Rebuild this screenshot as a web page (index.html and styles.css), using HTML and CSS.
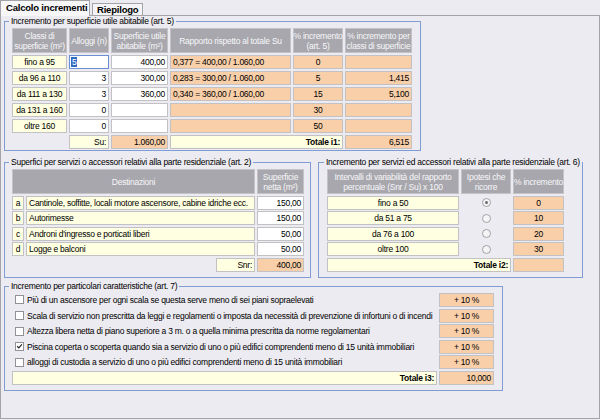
FILE: index.html
```html
<!DOCTYPE html>
<html lang="it">
<head>
<meta charset="utf-8">
<title>Calcolo incrementi</title>
<link rel="stylesheet" href="styles.css">
</head>
<body>
<div class="tabs">
  <div class="tab active">Calcolo incrementi</div>
  <div class="tab">Riepilogo</div>
</div>
<div class="panel">
  <fieldset class="group g1">
    <legend>Incremento per superficie utile abitabile (art. 5)</legend>
    <div class="grid t1">
      <div class="h">Classi di<br>superficie (m²)</div>
      <div class="h">Alloggi (n)</div>
      <div class="h">Superficie utile<br>abitabile (m²)</div>
      <div class="h">Rapporto rispetto al totale Su</div>
      <div class="h">% incremento<br>(art. 5)</div>
      <div class="h">% incremento per<br>classi di superficie</div>

      <div class="c y ctr">fino a 95</div>
      <div class="c w focus"><span class="sel">5</span></div>
      <div class="c w r">400,00</div>
      <div class="c o">0,377 = 400,00 / 1.060,00</div>
      <div class="c o ctr">0</div>
      <div class="c o r"></div>

      <div class="c y ctr">da 96 a 110</div>
      <div class="c w r">3</div>
      <div class="c w r">300,00</div>
      <div class="c o">0,283 = 300,00 / 1.060,00</div>
      <div class="c o ctr">5</div>
      <div class="c o r">1,415</div>

      <div class="c y ctr">da 111 a 130</div>
      <div class="c w r">3</div>
      <div class="c w r">360,00</div>
      <div class="c o">0,340 = 360,00 / 1.060,00</div>
      <div class="c o ctr">15</div>
      <div class="c o r">5,100</div>

      <div class="c y ctr">da 131 a 160</div>
      <div class="c w r">0</div>
      <div class="c w r"></div>
      <div class="c o"></div>
      <div class="c o ctr">30</div>
      <div class="c o r"></div>

      <div class="c y ctr">oltre 160</div>
      <div class="c w r">0</div>
      <div class="c w r"></div>
      <div class="c o"></div>
      <div class="c o ctr">50</div>
      <div class="c o r"></div>

      <div class="blank"></div>
      <div class="c y r">Su:</div>
      <div class="c o r">1.060,00</div>
      <div class="c y r b span2">Totale i1:</div>
      <div class="c o r">6,515</div>
    </div>
  </fieldset>

  <div class="row2">
    <fieldset class="group g2">
      <legend>Superfici per servizi o accessori relativi alla parte residenziale (art. 2)</legend>
      <div class="grid t2">
        <div class="h span2">Destinazioni</div>
        <div class="h">Superficie<br>netta (m²)</div>

        <div class="c y ctr">a</div>
        <div class="c y">Cantinole, soffitte, locali motore ascensore, cabine idriche ecc.</div>
        <div class="c w r">150,00</div>

        <div class="c y ctr">b</div>
        <div class="c y">Autorimesse</div>
        <div class="c w r">150,00</div>

        <div class="c y ctr">c</div>
        <div class="c y">Androni d'ingresso e porticati liberi</div>
        <div class="c w r">50,00</div>

        <div class="c y ctr">d</div>
        <div class="c y">Logge e balconi</div>
        <div class="c w r">50,00</div>

        <div class="blank"></div>
        <div class="c y r snr">Snr:</div>
        <div class="c o r">400,00</div>
      </div>
    </fieldset>

    <fieldset class="group g3">
      <legend>Incremento per servizi ed accessori relativi alla parte residenziale (art. 6)</legend>
      <div class="grid t3">
        <div class="h">Intervalli di variabilità del rapporto<br>percentuale (Snr / Su) x 100</div>
        <div class="h">Ipotesi che<br>ricorre</div>
        <div class="h">% incremento</div>

        <div class="c y ctr">fino a 50</div>
        <div class="radio-cell"><span class="radio on"></span></div>
        <div class="c o ctr">0</div>

        <div class="c y ctr">da 51 a 75</div>
        <div class="radio-cell"><span class="radio"></span></div>
        <div class="c o ctr">10</div>

        <div class="c y ctr">da 76 a 100</div>
        <div class="radio-cell"><span class="radio"></span></div>
        <div class="c o ctr">20</div>

        <div class="c y ctr">oltre 100</div>
        <div class="radio-cell"><span class="radio"></span></div>
        <div class="c o ctr">30</div>

        <div class="c y r b span2">Totale i2:</div>
        <div class="c o ctr"></div>
      </div>
    </fieldset>
  </div>

  <fieldset class="group g4">
    <legend>Incremento per particolari caratteristiche (art. 7)</legend>
    <div class="grid t4">
      <div class="opt"><span class="chk"></span>Più di un ascensore per ogni scala se questa serve meno di sei piani sopraelevati</div>
      <div class="c o ctr">+ 10 %</div>
      <div class="opt"><span class="chk"></span>Scala di servizio non prescritta da leggi e regolamenti o imposta da necessità di prevenzione di infortuni o di incendi</div>
      <div class="c o ctr">+ 10 %</div>
      <div class="opt"><span class="chk"></span>Altezza libera netta di piano superiore a 3 m. o a quella minima prescritta da norme regolamentari</div>
      <div class="c o ctr">+ 10 %</div>
      <div class="opt"><span class="chk on"><svg viewBox="0 0 9 9" width="9" height="9"><path d="M1.5 4.2 L3.6 6.4 L7.6 1.8" fill="none" stroke="#222" stroke-width="1.5"/></svg></span>Piscina coperta o scoperta quando sia a servizio di uno o più edifici comprendenti meno di 15 unità immobiliari</div>
      <div class="c o ctr">+ 10 %</div>
      <div class="opt"><span class="chk"></span>alloggi di custodia a servizio di uno o più edifici comprendenti meno di 15 unità immobiliari</div>
      <div class="c o ctr">+ 10 %</div>
      <div class="c y r b">Totale i3:</div>
      <div class="c o r">10,000</div>
    </div>
  </fieldset>
</div>
</body>
</html>
```

FILE: styles.css
```css
* { box-sizing: border-box; }
html, body { margin: 0; padding: 0; }
body {
  width: 600px;
  height: 420px;
  overflow: hidden;
  background: #ecebf1;
  color: #000;
  font-family: "Liberation Sans", Arial, sans-serif;
  font-size: 8.5px;
  letter-spacing: -0.25px;
  line-height: 11px;
}

.tabs {
  display: flex;
  align-items: flex-end;
  height: 15px;
}
.tab {
  font-weight: bold;
  font-size: 9.5px;
  letter-spacing: -0.2px;
  white-space: nowrap;
  border: 1px solid #a3a3a8;
  border-bottom: none;
  background: #f4f4f6;
  height: 12px;
  line-height: 11px;
  padding: 0 4px;
  margin-left: 2px;
}
.tab.active {
  position: relative;
  z-index: 1;
  margin-left: 0;
  width: 90px;
  height: 16px;
  margin-bottom: -1px;
  line-height: 14px;
  padding: 0 0 0 5px;
  background: #f7f7f9;
}

.panel {
  height: 404px;
  border: 1px solid #a3a3a8;
  padding: 0 3px;
}

.group {
  margin: 0;
  min-width: 0;
  border: 1px solid #7f9dd2;
  padding: 1px 8px 1px 7px;
}
.group legend {
  margin-left: -3px;
  padding: 0 2px;
  line-height: 11px;
  white-space: nowrap;
}

.g1 { width: 417px; padding-bottom: 1px; }

.row2 {
  display: flex;
  gap: 7px;
  margin-top: 6px;
}
.g2 { width: 307px; padding: 1px 6px 5px 7px; }
.g3 { width: 265px; padding: 1px 3px 5px 8px; }

.g4 { width: 499px; margin-top: 3px; padding: 1px 8px 5px 7px; }

.grid { display: grid; column-gap: 2px; }
.t1 {
  grid-template-columns: 55px 40px 57px 121px 50px 67px;
  grid-template-rows: 25px repeat(6, 14px);
  row-gap: 2px;
}
.t2 {
  grid-template-columns: 12px 229px 47px;
  grid-template-rows: 25px repeat(5, 14px);
  row-gap: 1.6px;
}
.t3 {
  grid-template-columns: 132px 50px 51px;
  grid-template-rows: 25px repeat(5, 14px);
  row-gap: 1.6px;
}
.t4 {
  grid-template-columns: 425px 55px;
  grid-template-rows: repeat(6, 14px);
  row-gap: 1.6px;
}

.h {
  display: flex;
  align-items: center;
  justify-content: center;
  text-align: center;
  background: #a8a7ad;
  color: #f7f7f9;
  border: 1px solid #c4c4c8;
  line-height: 10px;
  white-space: nowrap;
}
.c {
  border: 1px solid #c2c2c4;
  line-height: 12px;
  padding: 0 2px;
  white-space: nowrap;
  overflow: hidden;
}
.y { background: #ffffe1; }
.o { background: #f8cfa9; }
.w { background: #ffffff; }
.r { text-align: right; }
.ctr { text-align: center; }
.b { font-weight: bold; }
.span2 { grid-column: span 2; }

.focus { border-color: #6b8fd4; padding-left: 1px; }
.sel { background: #316ac5; color: #fff; padding: 0 1px; }

.snr { justify-self: end; width: 39px; }

.radio-cell {
  display: flex;
  align-items: center;
  justify-content: center;
}
.radio {
  width: 9px;
  height: 9px;
  border-radius: 50%;
  border: 1px solid #a2a2a6;
  background: #f5f5f7;
  display: flex;
  align-items: center;
  justify-content: center;
}
.radio.on::after {
  content: "";
  width: 3px;
  height: 3px;
  border-radius: 50%;
  background: #6a6a6e;
}

.opt {
  display: flex;
  align-items: center;
  white-space: nowrap;
  line-height: 12px;
}
.chk {
  flex: none;
  width: 9px;
  height: 9px;
  border: 1px solid #929296;
  background: #ffffff;
  margin: 0 3px 0 3px;
  display: flex;
  align-items: center;
  justify-content: center;
}
.chk svg { display: block; width: 7px; height: 7px; }
```
